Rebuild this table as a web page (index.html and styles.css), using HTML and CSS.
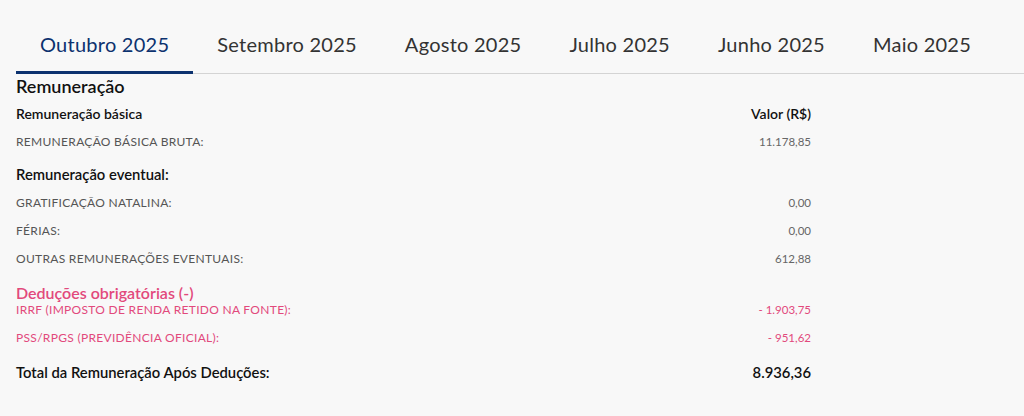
FILE: index.html
```html
<!DOCTYPE html>
<html lang="pt-BR">
<head>
<meta charset="utf-8">
<link rel="stylesheet" href="styles.css">
</head>
<body>
<div class="page">
  <nav class="tabs">
    <div class="tab active">Outubro 2025</div>
    <div class="tab">Setembro 2025</div>
    <div class="tab">Agosto 2025</div>
    <div class="tab">Julho 2025</div>
    <div class="tab">Junho 2025</div>
    <div class="tab">Maio 2025</div>
  </nav>
  <section class="content">
    <h2 class="title">Remuneração</h2>
    <div class="grid">
      <div class="head top">Remuneração básica</div>
      <div class="head top val">Valor (R$)</div>

      <div class="label r1">REMUNERAÇÃO BÁSICA BRUTA:</div>
      <div class="num r1">11.178,85</div>

      <div class="head big sub">Remuneração eventual:</div>
      <div class="sub"></div>

      <div class="label">GRATIFICAÇÃO NATALINA:</div>
      <div class="num">0,00</div>
      <div class="label">FÉRIAS:</div>
      <div class="num">0,00</div>
      <div class="label">OUTRAS REMUNERAÇÕES EVENTUAIS:</div>
      <div class="num">612,88</div>

      <div class="head pink ded">Deduções obrigatórias (-)</div>
      <div class="ded"></div>

      <div class="label pink first">IRRF (IMPOSTO DE RENDA RETIDO NA FONTE):</div>
      <div class="num pink first">- 1.903,75</div>
      <div class="label pink">PSS/RPGS (PREVIDÊNCIA OFICIAL):</div>
      <div class="num pink">- 951,62</div>

      <div class="head big total">Total da Remuneração Após Deduções:</div>
      <div class="head big total val">8.936,36</div>
    </div>
  </section>
</div>
</body>
</html>
```
FILE: styles.css
```css
* { box-sizing: border-box; }
html, body { margin: 0; padding: 0; }
body {
  background: #f8f8f8;
  font-family: "Lato", "Open Sans", sans-serif;
  color: #1b1b1b;
  width: 1024px;
  height: 416px;
  overflow: hidden;
}
.page { padding: 23px 0 0 16px; }
.tabs {
  display: flex;
  border-bottom: 1px solid #d4d4d4;
}
.tab {
  padding: 8px 24px 14px;
  font-size: 20px;
  letter-spacing: 0.25px;
  line-height: 26px;
  color: #333;
  border-bottom: 3px solid transparent;
  margin-bottom: -1px;
}
.tab.active {
  color: #0c326f;
  border-bottom-color: #0c326f;
}
.content { width: 795px; }
.title {
  margin: 1px 0 0;
  font-size: 18px;
  font-weight: 600;
  line-height: 22px;
  color: #111;
}
.grid {
  display: grid;
  grid-template-columns: 1fr auto;
  row-gap: 0;
}
.head {
  font-size: 14px;
  font-weight: 600;
  line-height: 18px;
  color: #111;
  padding-top: 6px;
}
.head.top { padding-top: 8px; }
.head.big { font-size: 14.8px; }
.val { text-align: right; }
.label, .num {
  font-size: 12px;
  letter-spacing: 0.3px;
  line-height: 16px;
  color: #555;
  padding-top: 12px;
}
.num { letter-spacing: 0; font-size: 11.5px; }
.label { text-transform: uppercase; }
.num { text-align: right; color: #666; }
.r1 { padding-top: 11px; }
.sub { padding-top: 15px; }
.ded { padding-top: 17px; font-size: 16px; }
.pink { color: #e2497c; }
.head.pink { color: #e2497c; }
.label.first, .num.first { padding-top: 0; }
.total { padding-top: 17px; }
```
